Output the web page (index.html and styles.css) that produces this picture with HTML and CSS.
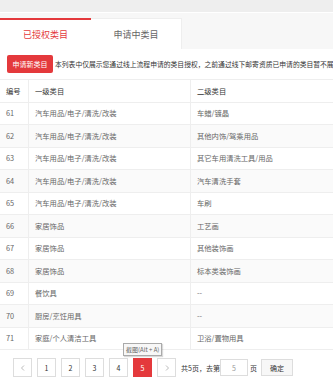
FILE: index.html
```html
<!DOCTYPE html>
<html lang="zh-CN">
<head>
    <meta charset="UTF-8">
    <meta name="viewport" content="width=device-width, initial-scale=1.0">
    <title>类目管理</title>
    <link rel="stylesheet" href="styles.css">
</head>
<body>
    <div class="topbar"></div>
    <div class="tabs">
        <div class="tab active">已授权类目</div>
        <div class="tab">申请中类目</div>
    </div>
    <div class="content">
        <div class="notice">
            <button class="apply-button">申请新类目</button>
            <div class="notice-text">本列表中仅展示您通过线上流程申请的类目授权，之前通过线下邮寄资质已申请的类目暂不展</div>
        </div>
        <table class="cat-table">
            <thead>
                <tr><th class="col-no">编号</th><th class="col-first">一级类目</th><th>二级类目</th></tr>
            </thead>
            <tbody>
                <tr><td>61</td><td>汽车用品/电子/清洗/改装</td><td>车蜡/镀晶</td></tr>
                <tr><td>62</td><td>汽车用品/电子/清洗/改装</td><td>其他内饰/驾乘用品</td></tr>
                <tr><td>63</td><td>汽车用品/电子/清洗/改装</td><td>其它车用清洗工具/用品</td></tr>
                <tr><td>64</td><td>汽车用品/电子/清洗/改装</td><td>汽车清洗手套</td></tr>
                <tr><td>65</td><td>汽车用品/电子/清洗/改装</td><td>车刷</td></tr>
                <tr><td>66</td><td>家居饰品</td><td>工艺画</td></tr>
                <tr><td>67</td><td>家居饰品</td><td>其他装饰画</td></tr>
                <tr><td>68</td><td>家居饰品</td><td>标本类装饰画</td></tr>
                <tr><td>69</td><td>餐饮具</td><td>--</td></tr>
                <tr><td>70</td><td>厨房/烹饪用具</td><td>--</td></tr>
                <tr><td>71</td><td>家庭/个人清洁工具</td><td>卫浴/置物用具</td></tr>
            </tbody>
        </table>
        <div class="pager">
            <button class="page-btn arrow">
                <svg viewBox="0 0 8 8" class="chev"><path d="M5 1.5L2.5 4L5 6.5" /></svg>
            </button>
            <button class="page-btn">1</button>
            <button class="page-btn">2</button>
            <button class="page-btn">3</button>
            <button class="page-btn">4</button>
            <button class="page-btn current">5</button>
            <button class="page-btn arrow">
                <svg viewBox="0 0 8 8" class="chev"><path d="M3 1.5L5.5 4L3 6.5" /></svg>
            </button>
            <span class="pager-text">共5页，去第</span>
            <input class="page-input" type="text" value="5">
            <span class="pager-text">页</span>
            <button class="go-btn">确定</button>
            <div class="tooltip">截图(Alt + A)</div>
        </div>
    </div>
</body>
</html>
```

FILE: styles.css
```css
html, body {
    margin: 0;
    font-family: "Noto Sans CJK SC", "Liberation Sans", sans-serif;
    background-color: #ffffff;
    color: #333333;
    overflow: hidden;
}
.topbar {
    height: 12px;
    background-color: #eeeeee;
    border-bottom: 1px solid #ffffff;
}
.tabs {
    display: flex;
    background-color: #f7f7f7;
    padding-top: 5px;
}
.tab {
    width: 91px;
    height: 31px;
    display: flex;
    align-items: center;
    justify-content: center;
    font-size: 9px;
    color: #666666;
    background-color: #ffffff;
    border-top: 1px solid #eeeeee;
    border-right: 1px solid #eeeeee;
    box-sizing: border-box;
}
.tab.active {
    color: #e4393c;
    border-top: 2px solid #e4393c;
    border-right: none;
}
.content {
    background-color: #ffffff;
}
.notice {
    display: flex;
    align-items: center;
    padding: 6px 0 0 7px;
    height: 18px;
}
.apply-button {
    flex-shrink: 0;
    width: 46px;
    height: 18px;
    padding: 0;
    border: none;
    border-radius: 2px;
    background-color: #e4393c;
    color: #ffffff;
    font-family: inherit;
    font-size: 7px;
    margin-right: 2px;
}
.notice-text {
    font-size: 6.8px;
    color: #333333;
    white-space: nowrap;
    overflow: hidden;
}
.cat-table {
    width: 100%;
    margin-top: 6px;
    border-collapse: collapse;
    font-size: 7.3px;
    color: #666666;
}
.cat-table th,
.cat-table td {
    height: 21.5px;
    padding: 0 0 0 6px;
    text-align: left;
    font-weight: normal;
    border-top: 1px solid #eeeeee;
    border-bottom: 1px solid #eeeeee;
    border-left: 1px solid #eeeeee;
    white-space: nowrap;
}
.cat-table th:first-child,
.cat-table td:first-child {
    border-left: none;
}
.cat-table th {
    color: #333333;
}
.cat-table .col-no {
    width: 22px;
}
.cat-table .col-first {
    width: 155px;
}
.cat-table tbody tr:nth-child(even) {
    background-color: #fafafa;
}
.pager {
    position: relative;
    display: flex;
    align-items: center;
    padding: 8px 0 10px 13px;
}
.page-btn {
    width: 19px;
    height: 19px;
    padding: 0;
    margin-right: 5px;
    border: 1px solid #dddddd;
    background-color: #ffffff;
    color: #333333;
    font-family: inherit;
    font-size: 7px;
    display: flex;
    align-items: center;
    justify-content: center;
}
.page-btn.current {
    background-color: #e4393c;
    border-color: #e4393c;
    color: #ffffff;
}
.chev {
    width: 8px;
    height: 8px;
}
.chev path {
    fill: none;
    stroke: #aaaaaa;
    stroke-width: 0.8;
}
.pager-text {
    font-size: 7px;
    color: #333333;
}
.page-input {
    width: 28px;
    height: 17px;
    box-sizing: border-box;
    margin: 0 2px 0 0;
    padding: 0;
    border: 1px solid #dddddd;
    text-align: center;
    font-family: inherit;
    font-size: 7px;
    color: #999999;
}
.go-btn {
    width: 32px;
    height: 17px;
    margin-left: 4px;
    padding: 0;
    border: 1px solid #dddddd;
    background-color: #f7f7f7;
    color: #333333;
    font-family: inherit;
    font-size: 7px;
}
.tooltip {
    position: absolute;
    left: 123px;
    top: -7px;
    padding: 0 2px;
    height: 11px;
    line-height: 11px;
    font-size: 6px;
    color: #666666;
    background-color: #f7f7f7;
    border: 1px solid #aaaaaa;
    box-shadow: 1px 1px 1px rgba(0, 0, 0, 0.15);
    white-space: nowrap;
}
```
